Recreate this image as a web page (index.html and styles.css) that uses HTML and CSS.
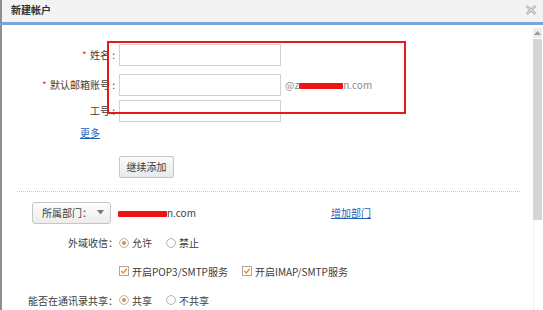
FILE: index.html
```html
<!DOCTYPE html>
<html lang="zh-CN">
<head>
<meta charset="utf-8">
<title>新建帐户</title>
<link rel="stylesheet" href="styles.css">
</head>
<body>
<div class="dialog">
  <div class="titlebar">
    <span class="title">新建帐户</span>
    <svg class="close" width="12" height="10" viewBox="0 0 12 10">
      <path d="M1.5 1 L10.5 9 M10.5 1 L1.5 9" stroke="#adadad" stroke-width="2.4" fill="none"/>
      <path d="M1.5 1 L10.5 9 M10.5 1 L1.5 9" stroke="#f1f1f1" stroke-width="0.9" fill="none"/>
    </svg>
  </div>
  <div class="body">
    <div class="content">
      <div class="row field-row r1">
        <label class="lbl"><span class="req">*</span> 姓名 :</label>
        <span class="input"></span>
      </div>
      <div class="row field-row r2">
        <label class="lbl"><span class="req">*</span> 默认邮箱账号 :</label>
        <span class="input"></span>
        <span class="suffix">@z<span class="redact r-a"></span>n.com</span>
      </div>
      <div class="row field-row r3">
        <label class="lbl">工号 :</label>
        <span class="input"></span>
      </div>
      <div class="more-row"><a class="link" href="#">更多</a></div>
      <div class="btn-row"><button class="btn">继续添加</button></div>
      <div class="divider"></div>
      <div class="dept-row">
        <span class="dept-btn">所属部门：<svg width="7" height="5" viewBox="0 0 7 5"><path d="M0 0 L7 0 L3.5 4.5 Z" fill="#777"/></svg></span>
        <span class="domain"><span class="redact r-b"></span>n.com</span>
        <a class="link add-dept" href="#">增加部门</a>
      </div>
      <div class="row opt-row">
        <span class="lbl2">外域收信：</span>
        <span class="opts">
          <span class="opt"><svg class="radio" width="10" height="10" viewBox="0 0 10 10"><circle cx="5" cy="5" r="4.4" fill="#fff" stroke="#a9a9a9" stroke-width="0.9"/><circle cx="5" cy="5" r="2" fill="#f0892a"/></svg>允许</span>
          <span class="opt"><svg class="radio" width="10" height="10" viewBox="0 0 10 10"><circle cx="5" cy="5" r="4.4" fill="#fff" stroke="#a9a9a9" stroke-width="0.9"/></svg>禁止</span>
        </span>
      </div>
      <div class="row opt-row">
        <span class="lbl2"></span>
        <span class="opts">
          <span class="opt"><svg class="check" width="10" height="10" viewBox="0 0 10 10"><rect x="0.5" y="0.5" width="9" height="9" fill="#fff" stroke="#a9a9a9"/><path d="M2.3 5 L4.2 7 L7.8 2.8" stroke="#f0892a" stroke-width="1.4" fill="none"/></svg>开启POP3/SMTP服务</span>
          <span class="opt"><svg class="check" width="10" height="10" viewBox="0 0 10 10"><rect x="0.5" y="0.5" width="9" height="9" fill="#fff" stroke="#a9a9a9"/><path d="M2.3 5 L4.2 7 L7.8 2.8" stroke="#f0892a" stroke-width="1.4" fill="none"/></svg>开启IMAP/SMTP服务</span>
        </span>
      </div>
      <div class="row opt-row">
        <span class="lbl2">能否在通讯录共享：</span>
        <span class="opts">
          <span class="opt"><svg class="radio" width="10" height="10" viewBox="0 0 10 10"><circle cx="5" cy="5" r="4.4" fill="#fff" stroke="#a9a9a9" stroke-width="0.9"/><circle cx="5" cy="5" r="2" fill="#f0892a"/></svg>共享</span>
          <span class="opt"><svg class="radio" width="10" height="10" viewBox="0 0 10 10"><circle cx="5" cy="5" r="4.4" fill="#fff" stroke="#a9a9a9" stroke-width="0.9"/></svg>不共享</span>
        </span>
      </div>
    </div>
    <div class="scrollbar">
      <div class="sb-up"><svg width="7" height="4" viewBox="0 0 7 4"><path d="M0 4 L7 4 L3.5 0 Z" fill="#9a9a9a"/></svg></div>
      <div class="sb-thumb"></div>
      <div class="sb-track"></div>
    </div>
  </div>
  <div class="annot"></div>
</div>
</body>
</html>
```
FILE: styles.css
```css
html, body {
  margin: 0;
  padding: 0;
  background: #fff;
}
body {
  font-family: "Noto Sans CJK SC", "Microsoft YaHei", sans-serif;
  font-size: 10px;
  color: #333;
}
.dialog {
  position: relative;
  width: 543px;
  height: 310px;
  overflow: hidden;
  display: flex;
  flex-direction: column;
}
.titlebar {
  height: 20px;
  flex: none;
  background: #f3f3f3;
  border-bottom: 3px solid #78a5dc;
  border-left: 2px solid #8e8e8e;
  display: flex;
  align-items: center;
  justify-content: space-between;
  padding: 0 5px 2px 9px;
  box-sizing: content-box;
}
.title {
  font-weight: bold;
  font-size: 10px;
  color: #2e2e2e;
  line-height: 12px;
}
.close {
  margin-right: 1px;
  margin-top: -1px;
}
.body {
  flex: 1;
  display: flex;
  border-left: 2px solid #8e8e8e;
  min-height: 0;
}
.content {
  flex: 1;
  display: flex;
  flex-direction: column;
  padding-top: 19px;
}
.row {
  display: grid;
  grid-template-columns: 113px auto auto;
  justify-content: start;
  align-items: center;
  column-gap: 4px;
}
.field-row { height: 22px; }
.r2 { margin-top: 8px; }
.r3 { margin-top: 4px; }
.lbl {
  text-align: right;
  color: #3c3c3c;
  line-height: 12px;
}
.req {
  color: #e3313a;
  margin-right: 1px;
}
.input {
  display: block;
  width: 160px;
  height: 20px;
  border: 1px solid #d2d2d2;
  background: #fff;
}
.suffix {
  color: #8a8a8a;
  line-height: 12px;
}
.redact {
  display: inline-block;
  height: 6px;
  background: #ef1313;
  vertical-align: 0;
  border-radius: 1px;
}
.r-a { width: 44px; }
.r-b { width: 49px; }
.more-row {
  height: 20px;
  margin-top: 1px;
  padding-left: 78px;
  display: flex;
  align-items: center;
}
.link {
  color: #1f5fb8;
  text-decoration: underline;
  line-height: 12px;
}
.btn-row {
  margin-top: 13px;
  padding-left: 117px;
  display: flex;
}
.btn {
  width: 55px;
  height: 22px;
  padding: 0;
  font: inherit;
  color: #3c3c3c;
  border: 1px solid #c6c6c6;
  border-radius: 2px;
  background: linear-gradient(#fbfbfb, #e9e9e9);
}
.divider {
  margin: 13px 11px 0 15px;
  border-top: 1px dotted #c8c8c8;
}
.dept-row {
  margin-top: 10px;
  height: 22px;
  display: flex;
  align-items: center;
  padding-left: 30px;
}
.dept-btn {
  box-sizing: border-box;
  width: 79px;
  height: 22px;
  display: flex;
  align-items: center;
  gap: 5px;
  padding-left: 9px;
  border: 1px solid #c6c6c6;
  border-radius: 3px;
  background: linear-gradient(#fdfdfd, #ececec);
  color: #3c3c3c;
}
.domain {
  margin-left: 7px;
  color: #3c3c3c;
}
.add-dept {
  margin-left: 135px;
}
.opt-row {
  height: 20px;
  margin-top: 9px;
}
.lbl2 {
  text-align: right;
  color: #3c3c3c;
  margin-right: -3px;
}
.opts {
  display: flex;
  gap: 14px;
}
.opt {
  display: flex;
  align-items: center;
  gap: 3px;
  color: #3c3c3c;
}
.scrollbar {
  width: 12px;
  flex: none;
  display: flex;
  flex-direction: column;
  padding-top: 3px;
}
.sb-up {
  height: 10px;
  margin: 0 1px 0 2px;
  background: #ececec;
  display: flex;
  align-items: center;
  justify-content: center;
}
.sb-thumb {
  height: 181px;
  margin: 1px 1px 0 2px;
  background: #d5d5d5;
}
.sb-track {
  flex: 1;
  margin-left: 2px;
  border-left: 1px solid #efefef;
}
.annot {
  position: absolute;
  left: 107px;
  top: 41px;
  width: 295px;
  height: 69px;
  border: 2px solid #e51b1b;
}
```
